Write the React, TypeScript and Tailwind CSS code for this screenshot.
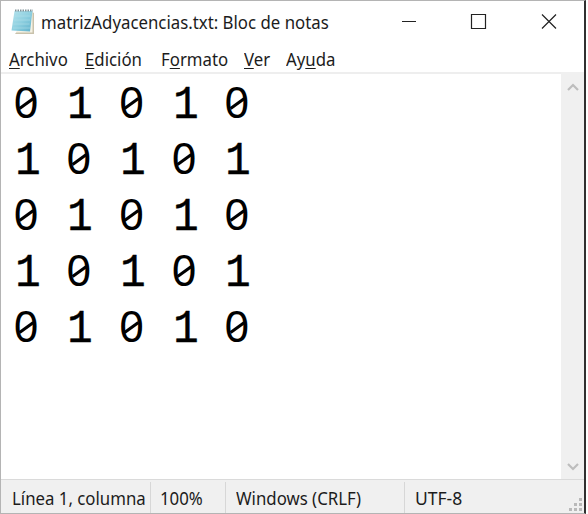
import type { ReactNode } from "react";

const rows = ["01010", "10101", "01010", "10101", "01010"];

function Digit({ value }: { value: string }) {
  if (value === "1") {
    return (
      <span className="block w-[52.700px] pt-[1px]">
        <span className="block w-[26px] origin-center scale-x-[0.9] font-['Liberation_Mono',monospace] text-[47px] leading-[58px] [-webkit-text-stroke:0.5px_#000]">1</span>
      </span>
    );
  }
  return (
    <span className="block w-[52.700px]">
      <span className="relative block w-[26px] font-['Noto_Sans',sans-serif] text-[44px] leading-[51px]">
        0
        <span className="absolute top-[26px] left-[4.500px] h-[3px] w-[17px] -rotate-[36deg] bg-black" />
      </span>
    </span>
  );
}

function Label({ width, children }: { width: string; children: ReactNode }) {
  return (
    <span className={`block shrink-0 whitespace-nowrap ${width}`}>
      <span className="inline-block origin-left scale-x-[0.96]">{children}</span>
    </span>
  );
}

function NotepadIcon() {
  return (
    <svg width="26" height="28" viewBox="0 0 26 28" className="shrink-0">
      <defs>
        <linearGradient id="page" x1="0" y1="0" x2="1" y2="1">
          <stop offset="0" stopColor="#b5e3ed" />
          <stop offset="0.5" stopColor="#8fd0e0" />
          <stop offset="1" stopColor="#5eb0cb" />
        </linearGradient>
      </defs>
      <path d="M5 26h19V5l-2-1z" fill="#c9c2ac" />
      <path d="M6 24.500h16.500V4z" fill="#f6f2e4" />
      <path d="M4.500 3H22.500l-2.500 20.500L1.500 22.500z" fill="url(#page)" />
      <path d="M4.500 8h16M4 12h16M3.500 16h16M3 20h17" stroke="#b3dfea" strokeWidth="0.600" />
      <path d="M5 2.500h18" stroke="#81949a" strokeWidth="2" strokeDasharray="1.500 1" />
    </svg>
  );
}

export default function App() {
  return (
    <div className="flex h-[514px] w-[586px] flex-col overflow-hidden border border-r-2 border-[#b4b4b4] border-r-[#303030] bg-white font-['Noto_Sans',sans-serif] text-[17.500px] text-[#1c1c1c]">
      <header className="flex h-[43px] shrink-0 items-center">
        <div className="flex pb-px pl-[9px]"><NotepadIcon /></div>
        <div className="pl-[5px]"><Label width="w-[322px]">matrizAdyacencias.txt: Bloc de notas</Label></div>
        <svg width="200" height="43" viewBox="363 1 200 43" className="shrink-0" fill="none" stroke="#222" strokeWidth="1.200">
          <path d="M402 21.500h14M471.500 14.500h14v14h-14zM542 14.500l14 14M556 14.500l-14 14" />
        </svg>
      </header>
      <nav className="flex h-7 shrink-0 items-center pt-[2px] pl-2 underline-offset-2">
        <Label width="w-[76px]"><u>A</u>rchivo</Label>
        <Label width="w-[75.500px]"><u>E</u>dición</Label>
        <Label width="w-[83.500px]">F<u>o</u>rmato</Label>
        <Label width="w-[42px]"><u>V</u>er</Label>
        <Label width="w-[60px]">Ay<u>u</u>da</Label>
      </nav>
      <main className="flex min-h-0 flex-1">
        <div className="flex-1 border-t-2 border-[#eeeeee] pt-[2px] pl-[12.500px] text-black">
          {rows.map((row, i) => (
            <div key={i} className="flex h-14">
              {row.split("").map((d, j) => <Digit key={j} value={d} />)}
            </div>
          ))}
        </div>
        <div className="flex w-[23px] flex-col items-center justify-between bg-[#f0f0f0] pt-[10px] pb-[7px]">
          <svg width="12" height="10" viewBox="0 0 12 10" fill="none" stroke="#bdbdbd" strokeWidth="2.200"><path d="M1 8l5-5 5 5" /></svg>
          <svg width="12" height="10" viewBox="0 0 12 10" fill="none" stroke="#bdbdbd" strokeWidth="2.200"><path d="M1 2l5 5 5-5" /></svg>
        </div>
      </main>
      <footer className="flex h-[34px] shrink-0 border-t border-[#dadada] bg-[#f0f0f0] pt-[2px] leading-[32px]">
        <div className="w-[150px] overflow-hidden border-r border-[#d7d7d7] pl-[11px]"><Label width="w-[138px]">Línea 1, columna</Label></div>
        <div className="w-[75px] border-r border-[#d7d7d7] pl-[9px]"><Label width="w-[60px]">100%</Label></div>
        <div className="w-[179px] border-r border-[#d7d7d7] pl-[10px]"><Label width="w-[150px]">Windows (CRLF)</Label></div>
        <div className="flex-1 pl-[10px]">UTF-8</div>
        <svg width="16" height="16" viewBox="0 0 16 16" fill="#b9b9b9" className="self-end"><path d="M11 1h3v3h-3zM11 6h3v3h-3zM6 6h3v3H6zM11 11h3v3h-3zM6 11h3v3H6zM1 11h3v3H1z" /></svg>
      </footer>
    </div>
  );
}
